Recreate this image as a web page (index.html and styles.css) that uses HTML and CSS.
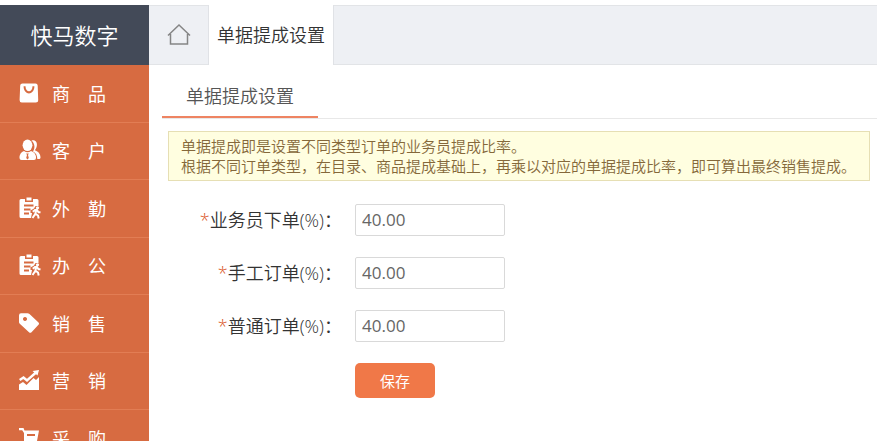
FILE: index.html
```html
<!doctype html>
<html lang="zh-CN">
<head>
<meta charset="utf-8">
<meta name="viewport" content="width=device-width, initial-scale=1">
<title>单据提成设置</title>
<link rel="stylesheet" href="styles.css">
</head>
<body>
<div class="app">
	<aside class="sidebar">
		<div class="brand">快马数字</div>
		<nav class="menu">
			<a class="menu-item" href="#">
				<svg class="menu-icon" viewBox="0 0 20 20"><path fill="currentColor" fill-rule="evenodd" d="M3.500 .5h13q2 0 2.200 2l.5 14.500q0 2.500-2.500 2.500H2.800Q.5 19.500.6 17l.6-14.500q.1-2 2.300-2zM4.600 3.300C4.600 12.800 15.400 12.800 15.400 3.300H13.500C13.500 10 6.500 10 6.500 3.300z"/></svg>
				<span>商&emsp;品</span>
			</a>
			<a class="menu-item" href="#">
				<svg class="menu-icon wide" viewBox="0 0 22 22"><path fill="currentColor" d="M12.500 1.500c4-1 6 2 5.300 5.500-.3 2-1.200 3.300-2 4.300 3.500 1.300 5.700 3.500 5.700 7.200 0 1-.8 1.500-1.800 1.500h-1.400c0-3.700-1.500-6.200-4.300-7.500 2-3 2.300-7.500-1.500-11z"/><ellipse cx="8.500" cy="6.300" rx="4.900" ry="5.800" fill="currentColor"/><path fill="currentColor" fill-rule="evenodd" d="M5 12q3.500 2.500 7 0 5 1.500 5 7 0 2-2 2H2.500q-2 0-2-2 0-5.500 4.500-7zM7.200 14.500l.8 1.500-.8 3 1.300 1.500 1.300-1.500-.8-3 .8-1.500z"/></svg>
				<span>客&emsp;户</span>
			</a>
			<a class="menu-item" href="#">
				<svg class="menu-icon wide" viewBox="0 0 22 22"><path fill="currentColor" fill-rule="evenodd" d="M2 2h4v3h8V2h4q1.500 0 1.500 1.500V9h-3l-1.500 2.500-3.500 2V16h1.500L12 21H2Q.5 21 .5 19.500v-16Q.5 2 2 2zM5 7.500v2h9.500v-2zM5 11.500v2h6.500v-2zM5 15.500v2h5v-2z"/><path fill="currentColor" d="M7.500 .5h5v3h-5z"/><circle cx="18.500" cy="10.800" r="1.600" fill="currentColor"/><path d="M13.800 14.800l2.200-1.800h2l1.500 2.200h2M17.200 13.500l-1 3.500-2.700 4M16.200 16.500l2.800 2 .7 3" fill="none" stroke="currentColor" stroke-width="2"/></svg>
				<span>外&emsp;勤</span>
			</a>
			<a class="menu-item" href="#">
				<svg class="menu-icon wide" viewBox="0 0 22 22"><path fill="currentColor" fill-rule="evenodd" d="M2 2h4v3h8V2h4q1.500 0 1.500 1.500V9h-3l-1.500 2.500-3.500 2V16h1.500L12 21H2Q.5 21 .5 19.500v-16Q.5 2 2 2zM5 7.500v2h9.500v-2zM5 11.500v2h6.500v-2zM5 15.500v2h5v-2z"/><path fill="currentColor" d="M7.500 .5h5v3h-5z"/><circle cx="18.500" cy="10.800" r="1.600" fill="currentColor"/><path d="M13.800 14.800l2.200-1.800h2l1.500 2.200h2M17.200 13.500l-1 3.500-2.700 4M16.200 16.500l2.800 2 .7 3" fill="none" stroke="currentColor" stroke-width="2"/></svg>
				<span>办&emsp;公</span>
			</a>
			<a class="menu-item" href="#">
				<svg class="menu-icon" viewBox="0 0 20 20"><path fill="currentColor" fill-rule="evenodd" d="M2 .3l6.500-.1q1 0 2 .8l9 8.500q1 1.200 0 2.300l-7 7.500q-1.300 1-2.500 0L.8 10.800Q0 10 0 9V2.500Q0 .4 2 .3zM6 4a2 2 0 1 0 .01 0z"/></svg>
				<span>销&emsp;售</span>
			</a>
			<a class="menu-item" href="#">
				<svg class="menu-icon" viewBox="0 0 20 20"><path fill="currentColor" d="M0 14.500l4-2.500 3.500 3L14.500 8l2.500 2 3-3v13H0z"/><path d="M.7 10L4.500 7.500 8 10.500l9-8" fill="none" stroke="currentColor" stroke-width="2.400"/><path fill="currentColor" d="M13.500 1L20 0l-1.500 5.500z"/></svg>
				<span>营&emsp;销</span>
			</a>
			<a class="menu-item" href="#">
				<svg class="menu-icon" viewBox="0 0 20 20"><path fill="currentColor" fill-rule="evenodd" d="M0 0h4.500l1 2.500H20L18 13H7v2h11v2H5V5L3.200 2.200H0zM8 6v2h8V6z"/><circle cx="7" cy="18.500" r="1.500" fill="currentColor"/><circle cx="16" cy="18.500" r="1.500" fill="currentColor"/></svg>
				<span>采&emsp;购</span>
			</a>
		</nav>
	</aside>

	<main class="main">
		<div class="tabs">
			<a class="tab tab-home" href="#" aria-label="首页">
				<svg class="home-icon" viewBox="0 0 24 22"><path d="M1 12.500L12 2l11 10.500M3.500 11v10h17V11" fill="none" stroke="currentColor" stroke-width="1.500"/></svg>
			</a>
			<a class="tab tab-active" href="#">单据提成设置</a>
		</div>

		<div class="subtabs">
			<a class="subtab" href="#">单据提成设置</a>
		</div>

		<div class="notice">
			<p>单据提成即是设置不同类型订单的业务员提成比率。</p>
			<p>根据不同订单类型，在目录、商品提成基础上，再乘以对应的单据提成比率，即可算出最终销售提成。</p>
		</div>

		<form class="form">
			<label for="salesman"><span class="required">*</span>业务员下单(%)：</label>
			<input id="salesman" type="text" value="40.00">
			<label for="manual"><span class="required">*</span>手工订单(%)：</label>
			<input id="manual" type="text" value="40.00">
			<label for="normal"><span class="required">*</span>普通订单(%)：</label>
			<input id="normal" type="text" value="40.00">
			<button class="save" type="button">保存</button>
		</form>
	</main>
</div>
</body>
</html>
```
FILE: styles.css
```css
* {
	box-sizing: border-box;
}
body {
	margin: 0;
	background-color: #ffffff;
	color: #333333;
	font-family: "Open Sans", "Noto Sans CJK SC", sans-serif;
	font-size: 18px;
	font-weight: 350;
}
a {
	color: inherit;
	text-decoration: none;
}
.app {
	display: flex;
	height: 100vh;
	padding-top: 5px;
	overflow: hidden;
}

/* left menu */
.sidebar {
	flex: none;
	width: 149px;
	background-color: #d76b41;
	color: #ffffff;
}
.brand {
	height: 60px;
	background-color: #434a58;
	font-size: 22px;
	line-height: 60px;
	text-align: center;
}
.menu {
	display: grid;
	grid-auto-rows: 58px 57px;
}
.menu-item {
	display: flex;
	align-items: center;
	gap: 13px;
	padding: 0 0 2px 19px;
	border-bottom: 1px solid #e27d54;
	font-weight: 400;
}
.menu-icon {
	flex: none;
	width: 20px;
	height: 20px;
}
.menu-icon.wide {
	width: 22px;
	height: 22px;
	margin-right: -2px;
}

/* page tabs */
.main {
	flex: 1;
	min-width: 0;
}
.tabs {
	display: flex;
	height: 60px;
	background-color: #eef0f4;
	box-shadow: inset 0 1px #e2e4e7, inset 0 -1px #e2e4e7;
}
.tab {
	display: flex;
	align-items: center;
	padding-bottom: 2px;
	border-right: 1px solid #e0e2e6;
}
.tab-home {
	justify-content: center;
	width: 60px;
	color: #858585;
}
.home-icon {
	width: 24px;
	height: 22px;
}
.tab-active {
	padding: 0 8px 2px;
	background-color: #ffffff;
}
.subtabs {
	display: flex;
	height: 54px;
	margin-left: 13px;
	border-bottom: 1px solid #e8e8e8;
}
.subtab {
	height: 53px;
	padding: 0 24px;
	border-bottom: 2px solid #ee8462;
	color: #555555;
	line-height: 62px;
}

.notice {
	margin: 12px 7px 0 19px;
	padding: 4px 12px;
	border: 1px solid #e6dfb4;
	background-color: #fffee0;
	color: #85683a;
	font-size: 15px;
	line-height: 20px;
}
.notice p {
	margin: 0;
}

/* rate form */
.form {
	display: grid;
	grid-template-columns: 193px 150px;
	gap: 21px 13px;
	align-items: center;
	margin-top: 23px;
}
.form label {
	padding-bottom: 2px;
	text-align: right;
	white-space: nowrap;
}
.required {
	color: #d9531e;
}
.form input {
	width: 150px;
	height: 32px;
	padding: 0 6px 2px;
	border: 1px solid #d9d9d9;
	border-radius: 2px;
	background-color: #ffffff;
	color: #666666;
	font-family: inherit;
	font-size: 17px;
	font-weight: 400;
}
.save {
	grid-column: 2;
	width: 80px;
	height: 35px;
	padding: 0;
	border: 0;
	border-radius: 5px;
	background-color: #f07848;
	color: #ffffff;
	font-family: inherit;
	font-size: 15px;
}
```
